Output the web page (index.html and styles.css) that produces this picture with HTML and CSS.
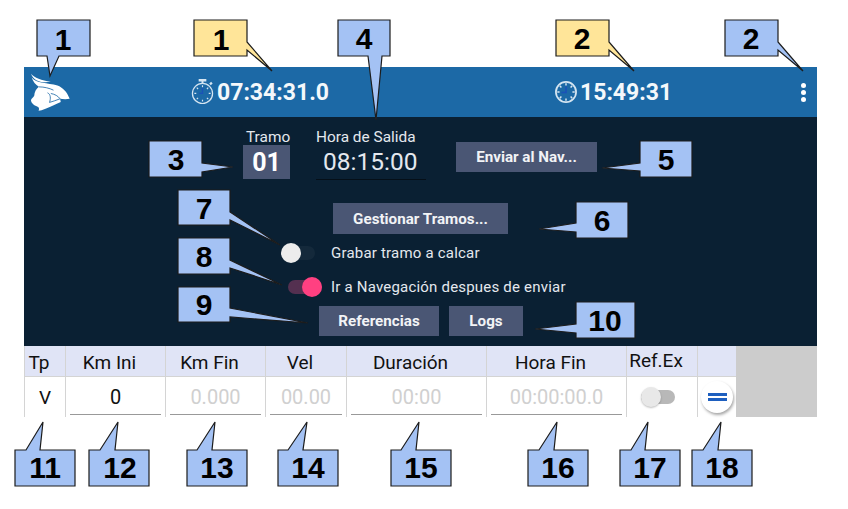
FILE: index.html
```html
<!DOCTYPE html>
<html lang="en">
<head>
    <meta charset="UTF-8">
    <title>Calculo de Tramos</title>
    <link rel="stylesheet" href="styles.css">
</head>
<body>
    <div class="app">
        <div class="topbar">
            <svg class="logo" viewBox="84 215 130 125">
                <path fill="#fff" d="M90 222 C100 234 122 242 150 246 C122 252 98 244 90 222 Z"/>
                <path fill="#fff" d="M92 234 C106 252 140 250 170 258 C186 264 198 276 207 298 C196 300 186 299 178 298 L180 308 C160 318 140 326 122 333 L113 334 C116 328 114 324 110 322 C98 318 90 310 90 302 C92 296 98 294 100 288 C100 278 106 268 114 262 C104 256 96 246 92 234 Z"/>
                <path fill="none" stroke="#1c69a6" stroke-width="2.5" d="M114 262 C130 262 146 266 158 272 M140 280 C150 284 150 298 146 309 M150 282 C162 284 172 290 178 298 M146 309 C156 306 168 302 178 298"/>
            </svg>
            <div class="time">
                <svg class="time-icon" viewBox="0 0 24 27">
                    <path fill="#d5e5f1" d="M8 0 H16 V2.5 H13 V5 H11 V2.5 H8 Z M19 4.5 L21 2.8 L22.6 4.6 L20.6 6.4 Z"/>
                    <circle cx="12" cy="15" r="10.5" fill="none" stroke="#d5e5f1" stroke-width="1.3"/>
                    <path stroke="#d5e5f1" stroke-width="1.2" d="M12 6.5 V8.5 M12 21.5 V23.5 M3.5 15 H5.5 M18.5 15 H20.5 M6 9 L7.4 10.4 M18 9 L16.6 10.4 M6 21 L7.4 19.6 M18 21 L16.6 19.6"/>
                    <path stroke="#1a52b8" stroke-width="1.4" fill="none" d="M12 9 V15 H8.5"/>
                </svg>
                <span>07:34:31.0</span>
            </div>
            <div class="time">
                <svg class="time-icon clock" viewBox="0 0 24 24">
                    <circle cx="12" cy="12" r="11" fill="none" stroke="#d5e5f1" stroke-width="1.9"/>
                    <path stroke="#d5e5f1" stroke-width="1.6" d="M12 2.5 V5 M12 19 V21.5 M2.5 12 H5 M19 12 H21.5 M5.3 5.3 L7 7 M18.7 5.3 L17 7 M5.3 18.7 L7 17 M18.7 18.7 L17 17"/>
                    <path stroke="#1a52b8" stroke-width="1.8" fill="none" d="M12 6 V12.5 H7"/>
                </svg>
                <span>15:49:31</span>
            </div>
            <div class="dots"><i></i><i></i><i></i></div>
        </div>

        <div class="panel">
            <div class="row-first">
                <div class="tramo">
                    <label>Tramo</label>
                    <div class="tramo-num">01</div>
                </div>
                <div class="salida">
                    <label>Hora de Salida</label>
                    <div class="salida-time">08:15:00</div>
                </div>
                <div class="btn btn-send">Enviar al Nav...</div>
            </div>
            <div class="btn btn-manage">Gestionar Tramos...</div>
            <div class="switch-row">
                <div class="toggle toggle-off"><b></b></div>
                <span>Grabar tramo a calcar</span>
            </div>
            <div class="switch-row second">
                <div class="toggle toggle-on"><b></b></div>
                <span>Ir a Navegación despues de enviar</span>
            </div>
            <div class="row-last">
                <div class="btn btn-ref">Referencias</div>
                <div class="btn btn-logs">Logs</div>
            </div>
        </div>

        <div class="table">
            <div class="th">Tp</div>
            <div class="th">Km Ini</div>
            <div class="th">Km Fin</div>
            <div class="th">Vel</div>
            <div class="th">Duración</div>
            <div class="th">Hora Fin</div>
            <div class="th th-up">Ref.Ex</div>
            <div class="th"></div>

            <div class="td">V</div>
            <div class="td"><input value="0"></div>
            <div class="td"><input placeholder="0.000"></div>
            <div class="td"><input placeholder="00.00"></div>
            <div class="td"><input placeholder="00:00"></div>
            <div class="td"><input placeholder="00:00:00.0"></div>
            <div class="td td-ref"><div class="toggle toggle-grey"><b></b></div></div>
            <div class="td td-fab"><div class="fab"><i></i><i></i></div></div>
        </div>
    </div>

    <!-- numbered callouts drawn over the screenshot -->
    <svg class="callouts" viewBox="0 0 848 509">
        <g class="blue">
            <path d="M37 20 H90 V56 H59 L50 76 L47 56 H37 Z"/>
            <path d="M338 20 H390 V56 H382 L376 120 L368 56 H338 Z"/>
            <path d="M149 141 H202 V163 L233 167 L202 172 V177 H149 Z"/>
            <path d="M725 20 H778 V42 L803 71 L778 50 V56 H725 Z"/>
            <path d="M640 141 H692 V177 H640 V171 L602 168 L640 163 Z"/>
            <path d="M178 190 H230 V212 L280 245 L230 220 V225 H178 Z"/>
            <path d="M178 238 H230 V260 L282 285 L230 268 V274 H178 Z"/>
            <path d="M178 287 H230 V308 L308 323 L230 317 V322 H178 Z"/>
            <path d="M576 202 H628 V238 H576 V232 L539 229 L576 223 Z"/>
            <path d="M576 302 H635 V338 H576 V333 L535 329 L576 324 Z"/>
            <path d="M15 450 H26 L43 422 L40 450 H75 V486 H15 Z"/>
            <path d="M89 450 H100 L118 422 L115 450 H149 V486 H89 Z"/>
            <path d="M187 450 H197 L215 422 L212 450 H247 V486 H187 Z"/>
            <path d="M278 450 H288 L307 422 L303 450 H338 V486 H278 Z"/>
            <path d="M391 450 H401 L419 422 L416 450 H451 V486 H391 Z"/>
            <path d="M528 450 H539 L557 422 L554 450 H588 V486 H528 Z"/>
            <path d="M620 450 H631 L648 422 L645 450 H680 V486 H620 Z"/>
            <path d="M692 450 H703 L721 422 L718 450 H752 V486 H692 Z"/>
        </g>
        <g class="yellow">
            <path d="M194 20 H247 V42 L272 71 L247 50 V56 H194 Z"/>
            <path d="M556 20 H609 V42 L634 71 L609 50 V56 H556 Z"/>
        </g>
        <g class="nums">
            <text x="63" y="50">1</text>
            <text x="221" y="50">1</text>
            <text x="364" y="49">4</text>
            <text x="582" y="49">2</text>
            <text x="751" y="49">2</text>
            <text x="176" y="170">3</text>
            <text x="666" y="170">5</text>
            <text x="602" y="231">6</text>
            <text x="204" y="219">7</text>
            <text x="204" y="267">8</text>
            <text x="204" y="315">9</text>
            <text x="605" y="331">10</text>
            <text x="45" y="478">11</text>
            <text x="120" y="478">12</text>
            <text x="217" y="478">13</text>
            <text x="308" y="478">14</text>
            <text x="421" y="478">15</text>
            <text x="558" y="478">16</text>
            <text x="650" y="478">17</text>
            <text x="722" y="478">18</text>
        </g>
    </svg>
</body>
</html>
```

FILE: styles.css
```css
html, body {
    margin: 0;
    background: #fff;
    font-family: Roboto, sans-serif;
}
body {
    position: relative;
    width: 848px;
    height: 509px;
    overflow: hidden;
}
.app {
    width: 793px;
    padding-top: 67px;
    margin-left: 24px;
}

/* top bar */
.topbar {
    height: 50px;
    background-color: #1c69a6;
    display: grid;
    grid-template-columns: 167px 364px 1fr 16px;
    align-items: center;
}
.logo {
    width: 43px;
    height: 42px;
    margin-left: 5px;
}
.time {
    display: flex;
    align-items: center;
    gap: 3px;
    color: #f4f8fb;
    font-size: 23px;
    font-weight: 700;
}
.time-icon {
    width: 23px;
    height: 26px;
}
.time-icon.clock {
    width: 22px;
    height: 22px;
}
.dots i {
    display: block;
    width: 5px;
    height: 5px;
    margin: 2px 0;
    border-radius: 50%;
    background: #fff;
}

/* dark panel */
.panel {
    height: 229px;
    background-color: #0a2033;
    color: #e4e8ee;
    font-size: 15.4px;
    overflow: hidden;
}
.panel label {
    display: block;
    line-height: 16px;
    white-space: nowrap;
}
.btn {
    background-color: #4a5674;
    color: #f2f3f6;
    font-size: 15.2px;
    font-weight: 700;
    display: flex;
    align-items: center;
    justify-content: center;
    height: 30px;
}
.row-first {
    display: flex;
    align-items: flex-start;
    padding: 12px 0 0 219px;
}
.tramo {
    width: 47px;
    text-align: center;
}
.tramo label {
    padding-left: 3px;
}
.tramo-num {
    height: 34px;
    line-height: 35px;
    background-color: #4a5674;
    color: #fff;
    font-size: 25px;
    font-weight: 700;
}
.salida {
    width: 110px;
    margin-left: 26px;
    border-bottom: 1px solid #050f18;
}
.salida-time {
    padding-left: 7px;
    font-size: 24.5px;
    line-height: 34px;
}
.btn-send {
    width: 141px;
    margin: 13px 0 0 30px;
}
.btn-manage {
    width: 175px;
    height: 31px;
    margin: 23px 0 0 309px;
}
.switch-row {
    display: flex;
    align-items: center;
    height: 20px;
    margin-top: 9px;
    font-size: 15px;
    letter-spacing: 0.2px;
}
.switch-row.second {
    margin-top: 14px;
}
.toggle {
    position: relative;
    width: 34px;
    height: 14px;
    border-radius: 7px;
}
.toggle b {
    position: absolute;
    top: -3px;
    width: 20px;
    height: 20px;
    border-radius: 50%;
}
.toggle-off {
    margin: 0 16px 0 257px;
    background-color: #14293b;
}
.toggle-off b {
    left: 0;
    background-color: #ececec;
}
.toggle-on {
    margin: 0 9px 0 264px;
    background-color: #543050;
}
.toggle-on b {
    right: 0;
    background-color: #ff4081;
}
.toggle-grey {
    margin: 0 auto;
    background-color: #b8b8b8;
}
.toggle-grey b {
    left: 0;
    background-color: #e8e8e8;
    box-shadow: 0 1px 2px rgba(0, 0, 0, 0.25);
}
.row-last {
    display: flex;
    gap: 10px;
    margin: 9px 0 0 295px;
}
.btn-ref {
    width: 120px;
}
.btn-logs {
    width: 74px;
}

/* data table */
.table {
    display: grid;
    grid-template-columns: 41px 100px 100px 81px 140px 140px 71px 39px;
    grid-template-rows: 31px 40px;
    height: 71px;
    background-color: #cccccc;
    justify-content: start;
    color: #111;
    font-size: 19px;
}
.th, .td {
    display: flex;
    align-items: center;
    justify-content: center;
    border-left: 1.5px solid #d4d4d4;
    box-sizing: border-box;
}
.th {
    background-color: #e0e4f6;
    border-bottom: 1px solid #d4d4d4;
    padding: 3px 12px 0 0;
    white-space: nowrap;
}
.th-up {
    padding: 0 12px 2px 0;
}
.td {
    background-color: #fff;
    padding: 0 4px;
}
.td input {
    width: 100%;
    height: 36px;
    margin-top: -1px;
    padding: 1px 0 0;
    box-sizing: content-box;
    height: 35px;
    border: none;
    border-bottom: 1px solid #999;
    background: none;
    outline: none;
    font: 20px Roboto, sans-serif;
    color: #111;
    text-align: center;
}
.td input::placeholder {
    color: #d0d0d0;
    opacity: 1;
}
.td-ref {
    padding: 0 12px 0 4px;
}
.td-fab {
    padding: 0;
}
.fab {
    width: 32px;
    height: 32px;
    border-radius: 50%;
    background: #fff;
    box-shadow: 1px 2px 3px rgba(0, 0, 0, 0.35);
    display: flex;
    flex-direction: column;
    align-items: center;
    justify-content: center;
    gap: 2px;
}
.fab i {
    width: 19px;
    height: 3px;
    background-color: #1e5fbf;
}

/* callouts */
.callouts {
    position: absolute;
    left: 0;
    top: 0;
    width: 848px;
    height: 509px;
}
.callouts path {
    stroke: #1c1c1c;
    stroke-width: 1.2;
}
.blue path {
    fill: #a4c2f4;
}
.yellow path {
    fill: #ffe599;
}
.nums text {
    font-family: "Liberation Sans", Arial, sans-serif;
    font-size: 30px;
    font-weight: 700;
    text-anchor: middle;
    fill: #000;
}
```
